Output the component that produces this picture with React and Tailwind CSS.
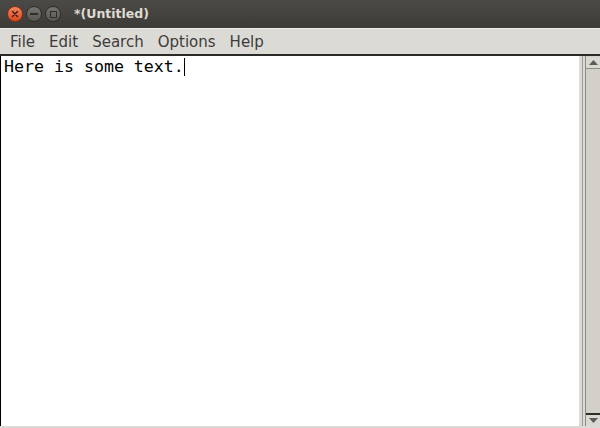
import React from 'react';

const menus = ['File', 'Edit', 'Search', 'Options', 'Help'];

const WindowButton = ({ kind }) => {
  if (kind === 'close') {
    return (
      <div className="w-[16px] h-[16px] rounded-full bg-gradient-to-b from-[#f4855a] to-[#d9461c] border border-[#8a2f12] flex items-center justify-center">
        <svg width="8" height="8" viewBox="0 0 8 8">
          <path d="M1.5 1.5 L6.5 6.5 M6.5 1.5 L1.5 6.5" stroke="#3a1a0e" strokeWidth="1.4" strokeLinecap="round" />
        </svg>
      </div>
    );
  }
  return (
    <div className="w-[16px] h-[16px] rounded-full bg-gradient-to-b from-[#75746f] to-[#585752] border border-[#2f2e2b] flex items-center justify-center">
      {kind === 'min' ? (
        <div className="w-[8px] h-[2px] bg-[#2f2e2b]" />
      ) : (
        <div className="w-[7px] h-[7px] border-[1.5px] border-[#2f2e2b]" />
      )}
    </div>
  );
};

export default function App() {
  return (
    <div className="w-[600px] h-[428px] flex flex-col bg-[#dcdad5] overflow-hidden font-['DejaVu_Sans',sans-serif]">
      {/* title bar */}
      <div className="h-[28px] shrink-0 flex items-center bg-gradient-to-b from-[#4b4a46] to-[#3c3b37] pl-[7px]">
        <div className="flex gap-[3px]">
          <WindowButton kind="close" />
          <WindowButton kind="min" />
          <WindowButton kind="max" />
        </div>
        <span className="ml-[13px] text-[12.5px] font-bold text-[#dfdbd2]">*(Untitled)</span>
      </div>

      {/* menubar */}
      <div className="h-[28px] shrink-0 flex items-center pl-[3px] pt-[2px] bg-[#dcdad5] border-t border-[#efede9] border-b-2 border-b-[#2a2a28]">
        {menus.map(m => (
          <span key={m} className="px-[7px] text-[15px] text-[#3c3c3c] leading-none">{m}</span>
        ))}
      </div>

      {/* editor + scrollbar */}
      <div className="flex-1 flex min-h-0 pb-[2px]">
        <div className="w-[579px] bg-white border-l border-black pl-[3px] pt-[1px]">
          <div className="font-['DejaVu_Sans_Mono',monospace] text-[16.6px] leading-[20px] text-black whitespace-pre flex items-center">
            <span>Here is some text.</span>
            <span className="inline-block w-px h-[18px] bg-black" />
          </div>
        </div>
        <div className="w-[3px]" />
        <div className="w-px bg-[#9c9a94]" />
        <div className="w-[2px]" />
        <div className="flex-1 flex flex-col border-l border-[#8d8b85] bg-[#d3d0ca] pt-[1px]">
          <div className="h-[12px] flex items-center justify-center bg-[#dad8d3] border-b border-[#8d8b85]">
            <svg width="9" height="5" viewBox="0 0 9 5">
              <path d="M4.5 0 L9 5 L0 5 Z" fill="#5c5b57" />
            </svg>
          </div>
          <div className="flex-1" />
          <div className="h-[13px] flex items-center justify-center bg-[#dad8d3] border-t-2 border-[#2f2e2b]">
            <svg width="9" height="5" viewBox="0 0 9 5">
              <path d="M0 0 L9 0 L4.5 5 Z" fill="#5c5b57" />
            </svg>
          </div>
        </div>
      </div>
    </div>
  );
}
